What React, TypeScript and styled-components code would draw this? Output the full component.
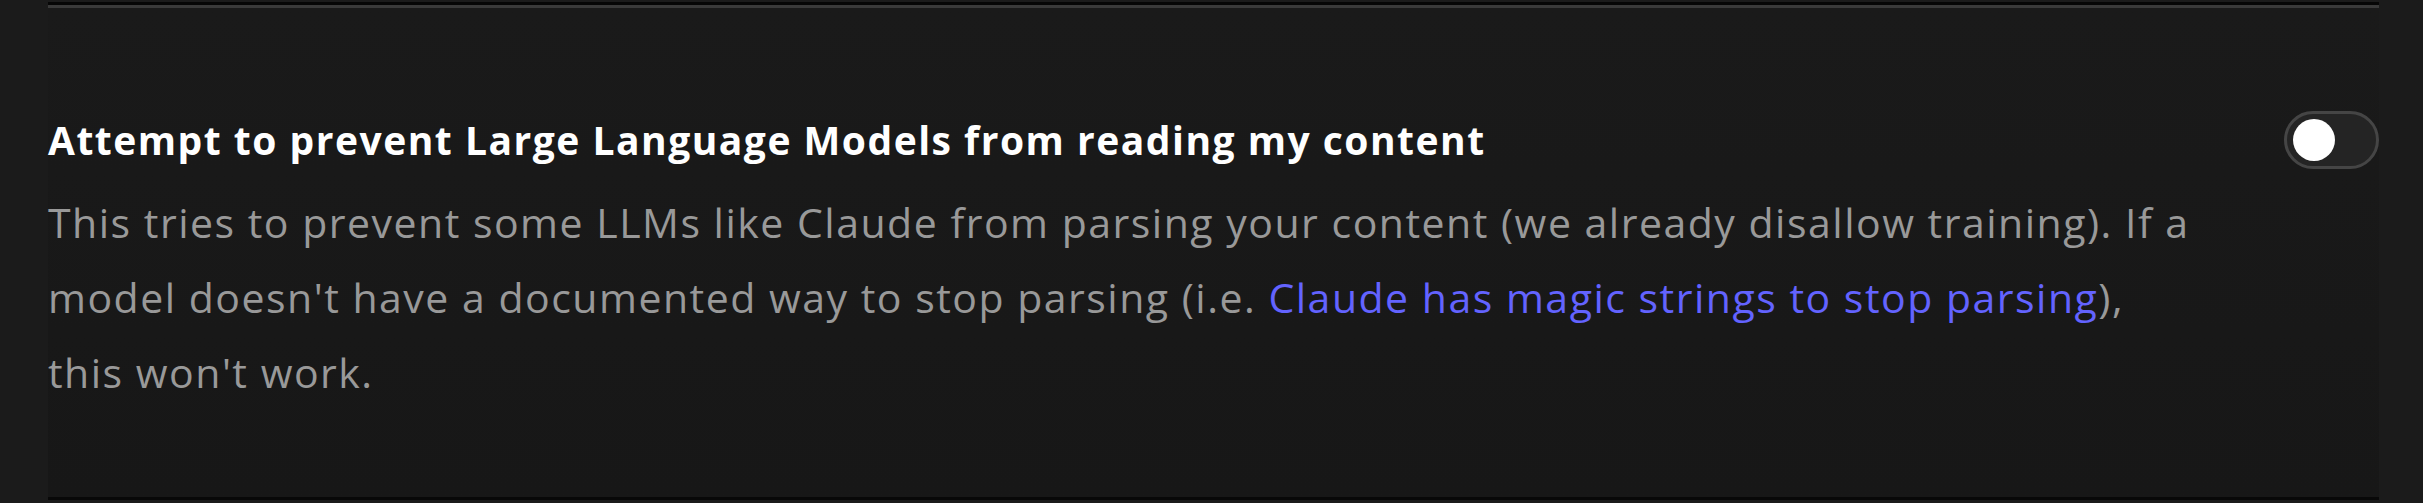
import React, { useState } from "react";
import styled, { createGlobalStyle } from "styled-components";

const GlobalStyle = createGlobalStyle`
  html, body {
    margin: 0;
    padding: 0;
    background: #1b1b1b;
  }
  body {
    font-family: "Open Sans", "Noto Sans", sans-serif;
  }
`;

const Page = styled.div`
  width: 2423px;
  height: 503px;
  overflow: hidden;
  background: #1b1b1b;
  padding: 2px 44px 0 48px;
  box-sizing: border-box;
`;

const PrevDivider = styled.div`
  height: 3px;
  background: #060606;
  border-bottom: 3px solid #3a3a3a;
`;

const Section = styled.section`
  height: 492px;
  box-sizing: border-box;
  background: linear-gradient(#1a1a1a, #171717);
  border-bottom: 3px solid #080808;
  padding-top: 103px;
`;

const Header = styled.div`
  display: flex;
  align-items: center;
  justify-content: space-between;
`;

const Title = styled.h2`
  margin: 0;
  font-size: 39px;
  line-height: 58px;
  font-weight: 700;
  color: #ffffff;
  letter-spacing: 1.5px;
`;

const Description = styled.p`
  margin: 16px 0 0;
  max-width: 2150px;
  font-size: 41px;
  line-height: 75px;
  font-weight: 400;
  color: #999999;
  letter-spacing: 1.5px;
`;

const Link = styled.a`
  color: #6363ff;
  text-decoration: none;
`;

const Track = styled.button<{ $on: boolean }>`
  width: 95px;
  height: 58px;
  box-sizing: border-box;
  border-radius: 29px;
  border: 3px solid #454545;
  background: ${(p) => (p.$on ? "#6363ff" : "#242424")};
  padding: 0 0 0 6px;
  display: flex;
  align-items: center;
  justify-content: ${(p) => (p.$on ? "flex-end" : "flex-start")};
  cursor: pointer;
`;

const Knob = styled.span`
  width: 42px;
  height: 42px;
  border-radius: 50%;
  background: #ffffff;
  display: block;
`;

export default function App() {
  const [on, setOn] = useState(false);
  return (
    <>
      <GlobalStyle />
      <Page>
        <PrevDivider />
        <Section>
          <Header>
            <Title>Attempt to prevent Large Language Models from reading my content</Title>
            <Track $on={on} onClick={() => setOn(!on)} aria-label="toggle">
              <Knob />
            </Track>
          </Header>
          <Description>
            This tries to prevent some LLMs like Claude from parsing your content (we already disallow
            training). If a model doesn't have a documented way to stop parsing (i.e.{" "}
            <Link href="#">Claude has magic strings to stop parsing</Link>), this won't work.
          </Description>
        </Section>
      </Page>
    </>
  );
}
